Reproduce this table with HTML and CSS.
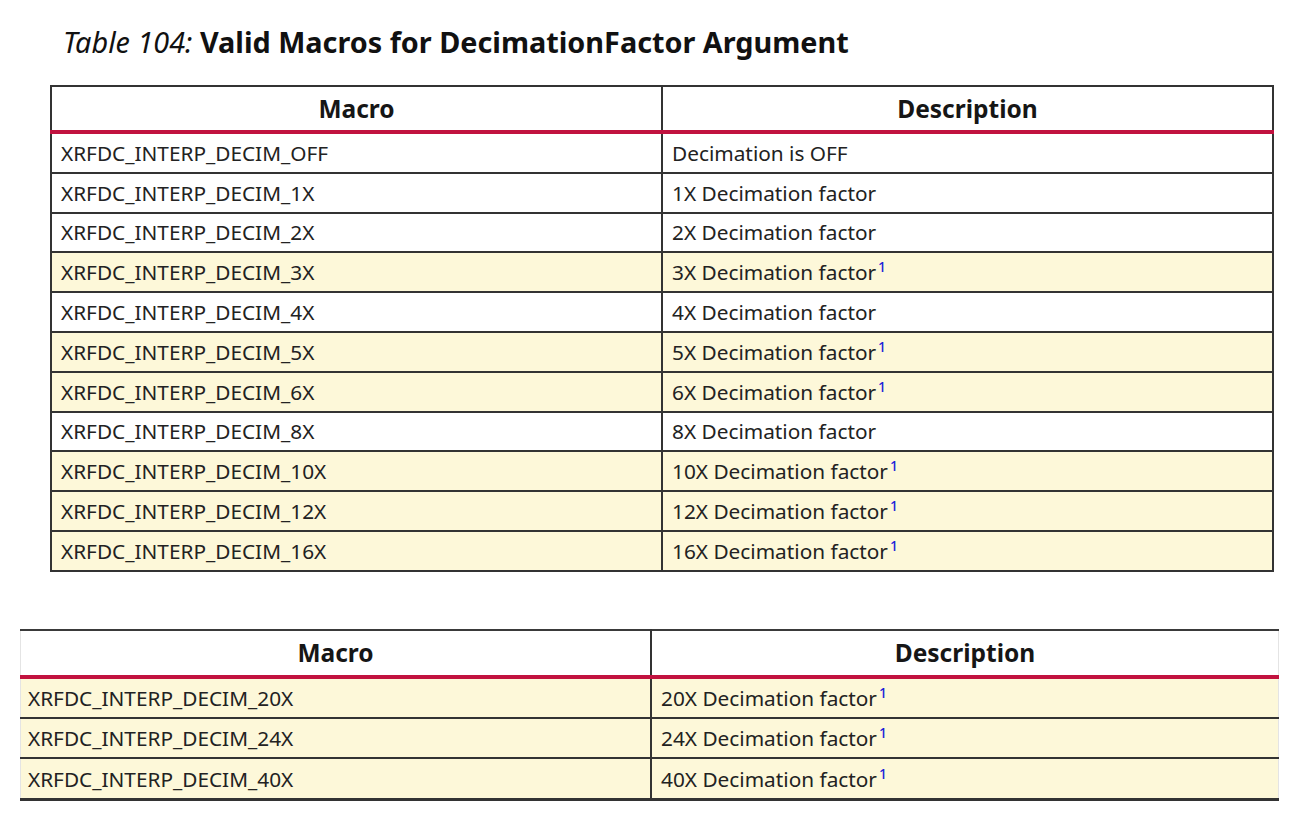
FILE: index.html
```html
<!DOCTYPE html>
<html>
<head>
<meta charset="utf-8">
<link rel="stylesheet" href="styles.css">
</head>
<body>
<div class="page">
  <h1 class="title"><span class="label">Table 104:</span> Valid Macros for DecimationFactor Argument</h1>
  <table class="tbl tbl-one">
    <thead>
      <tr><th>Macro</th><th>Description</th></tr>
    </thead>
    <tbody>
      <tr><td>XRFDC_INTERP_DECIM_OFF</td><td>Decimation is OFF</td></tr>
      <tr><td>XRFDC_INTERP_DECIM_1X</td><td>1X Decimation factor</td></tr>
      <tr><td>XRFDC_INTERP_DECIM_2X</td><td>2X Decimation factor</td></tr>
      <tr class="hl"><td>XRFDC_INTERP_DECIM_3X</td><td>3X Decimation factor<sup>1</sup></td></tr>
      <tr><td>XRFDC_INTERP_DECIM_4X</td><td>4X Decimation factor</td></tr>
      <tr class="hl"><td>XRFDC_INTERP_DECIM_5X</td><td>5X Decimation factor<sup>1</sup></td></tr>
      <tr class="hl"><td>XRFDC_INTERP_DECIM_6X</td><td>6X Decimation factor<sup>1</sup></td></tr>
      <tr><td>XRFDC_INTERP_DECIM_8X</td><td>8X Decimation factor</td></tr>
      <tr class="hl"><td>XRFDC_INTERP_DECIM_10X</td><td>10X Decimation factor<sup>1</sup></td></tr>
      <tr class="hl"><td>XRFDC_INTERP_DECIM_12X</td><td>12X Decimation factor<sup>1</sup></td></tr>
      <tr class="hl"><td>XRFDC_INTERP_DECIM_16X</td><td>16X Decimation factor<sup>1</sup></td></tr>
    </tbody>
  </table>
  <table class="tbl tbl-two">
    <thead>
      <tr><th>Macro</th><th>Description</th></tr>
    </thead>
    <tbody>
      <tr class="hl"><td>XRFDC_INTERP_DECIM_20X</td><td>20X Decimation factor<sup>1</sup></td></tr>
      <tr class="hl"><td>XRFDC_INTERP_DECIM_24X</td><td>24X Decimation factor<sup>1</sup></td></tr>
      <tr class="hl"><td>XRFDC_INTERP_DECIM_40X</td><td>40X Decimation factor<sup>1</sup></td></tr>
    </tbody>
  </table>
</div>
</body>
</html>
```
FILE: styles.css
```css
html, body {
  margin: 0;
  padding: 0;
  background: #ffffff;
}
body {
  font-family: "Noto Sans", "Open Sans", "DejaVu Sans", sans-serif;
  color: #1e1e1e;
}
.page {
  padding-top: 24px;
}
.title {
  margin: 0 0 0 63px;
  font-size: 28.8px;
  line-height: 36px;
  font-weight: 700;
  color: #111;
}
.title .label {
  font-style: italic;
  font-weight: 400;
}
.tbl {
  border-collapse: collapse;
  table-layout: fixed;
}
.tbl th, .tbl td {
  border: 2px solid #333;
  text-align: left;
  white-space: nowrap;
}
.tbl th {
  text-align: center;
  font-weight: 700;
  font-size: 24.5px;
  color: #161616;
  border-bottom: 4px solid #c1123f;
}
.tbl td {
  font-size: 20.8px;
  padding: 0 9px;
  height: 37.8px;
  color: #222;
}
.tbl tr.hl td {
  background: #fdf8d9;
}
.tbl sup {
  color: #2020d8;
  font-size: 14px;
  font-weight: 500;
  vertical-align: 8px;
  line-height: 0;
  margin-left: 2px;
}
.tbl-one {
  margin: 25px 0 0 50px;
  width: 1224px;
}
.tbl-one th {
  height: 43px;
  padding: 0;
}
.tbl-two {
  margin: 57px 0 0 20px;
  width: 1259px;
}
.tbl-two th {
  height: 44px;
  padding: 0;
  border-top: 2px solid #3a3a3a;
}
.tbl-two th:first-child,
.tbl-two td:first-child {
  border-left: 1px solid #e4e4e4;
  padding-left: 7px;
  width: 629px;
}
.tbl-two th:last-child,
.tbl-two td:last-child {
  border-right: 1px solid #e4e4e4;
}
.tbl-two th:first-child {
  padding-left: 0;
}
.tbl-two td {
  height: 38.3px;
}
.tbl-two tbody tr:last-child td {
  border-bottom: 3px solid #333;
}
```
